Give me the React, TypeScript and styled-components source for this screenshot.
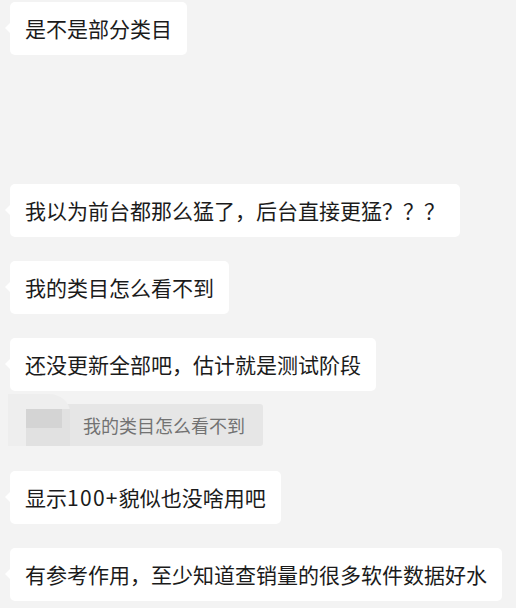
import React from "react";
import styled, { createGlobalStyle } from "styled-components";

const Global = createGlobalStyle`
  html, body {
    margin: 0;
    padding: 0;
    background: #f3f3f3;
  }
  body {
    font-family: "Noto Sans CJK SC", "Noto Sans", sans-serif;
  }
`;

const Page = styled.div`
  width: 516px;
  height: 608px;
  overflow: hidden;
  background: #f3f3f3;
  display: flex;
  flex-direction: column;
  align-items: flex-start;
  padding: 2px 0 0 10px;
  box-sizing: border-box;
`;

const Bubble = styled.div<{ $gap: number }>`
  position: relative;
  margin-top: ${(p) => p.$gap}px;
  background: #ffffff;
  border-radius: 5px;
  padding: 11px 15px 11px 15px;
  font-size: 21px;
  line-height: 31px;
  color: #1b1b1b;
  white-space: nowrap;

  &::before {
    content: "";
    position: absolute;
    left: -5px;
    top: 21px;
    border-style: solid;
    border-width: 5px 5px 5px 0;
    border-color: transparent #ffffff transparent transparent;
  }
`;

const Latin = styled.span`
  letter-spacing: 1.3px;
`;

const Quote = styled.div<{ $gap: number }>`
  margin-top: ${(p) => p.$gap}px;
  margin-left: -2px;
  display: flex;
  align-items: stretch;
  height: 42px;
  width: 255px;
  background: #e6e6e6;
  border-radius: 3px;
`;

const Mask = styled.div`
  position: relative;
  width: 62px;
  margin-top: -10px;
  background: #eeeeee;
  border-top-right-radius: 22px 18px;
  display: flex;
  flex-direction: column;
  align-items: flex-end;
  padding-top: 15px;
  box-sizing: border-box;
`;

const MaskBlock = styled.div`
  width: 44px;
  flex: 1;
  background: #e1e1e1;
  display: flex;
  flex-direction: column;
`;

const MaskSquare = styled.div`
  width: 36px;
  height: 19px;
  background: #d4d4d4;
`;

const QuoteText = styled.div`
  display: flex;
  align-items: center;
  padding-left: 13px;
  font-size: 18px;
  color: #727272;
  white-space: nowrap;
`;

export default function App() {
  return (
    <>
      <Global />
      <Page>
        <Bubble $gap={0}>是不是部分类目</Bubble>
        <Bubble $gap={129}>我以为前台都那么猛了，后台直接更猛？？？</Bubble>
        <Bubble $gap={24}>我的类目怎么看不到</Bubble>
        <Bubble $gap={24}>还没更新全部吧，估计就是测试阶段</Bubble>
        <Quote $gap={13}>
          <Mask>
            <MaskBlock>
              <MaskSquare />
            </MaskBlock>
          </Mask>
          <QuoteText>我的类目怎么看不到</QuoteText>
        </Quote>
        <Bubble $gap={25}>
          显示<Latin>100+</Latin>貌似也没啥用吧
        </Bubble>
        <Bubble $gap={24}>有参考作用，至少知道查销量的很多软件数据好水</Bubble>
      </Page>
    </>
  );
}
